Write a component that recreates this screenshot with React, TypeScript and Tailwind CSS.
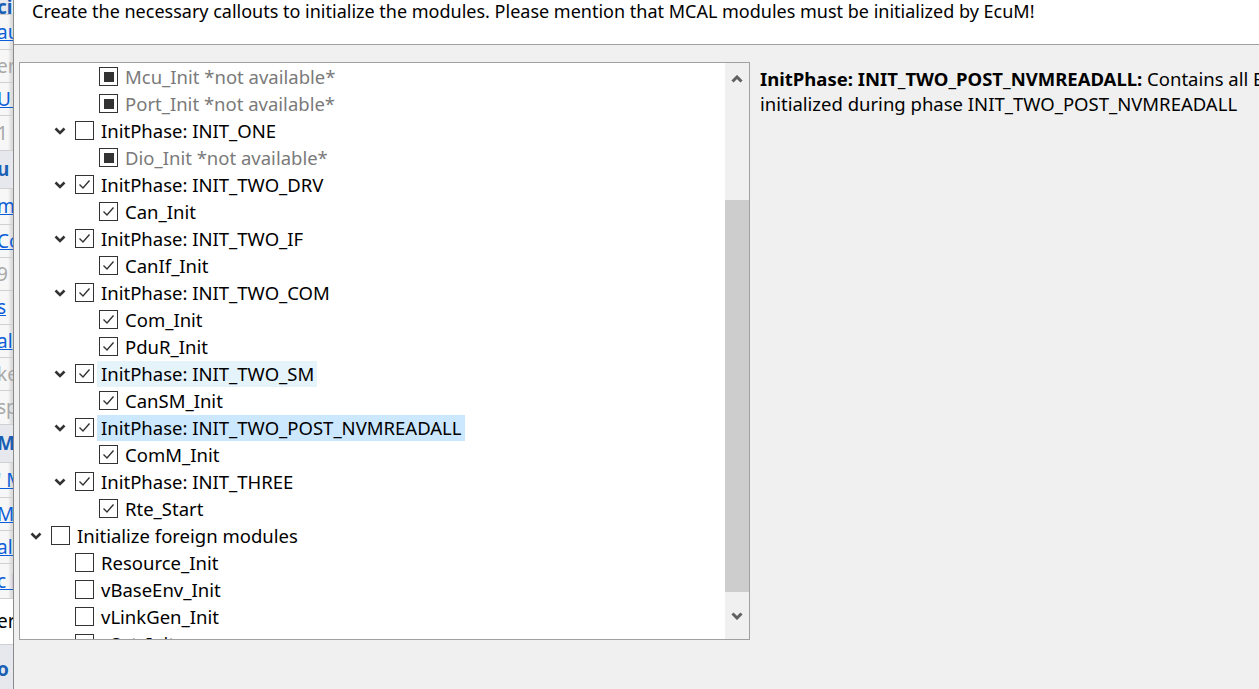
import React from "react";

type Node = {
  label: string;
  level: number;
  state: "on" | "off" | "na";
  expand?: boolean;
  hl?: "hover" | "sel";
};

const nodes: Node[] = [
  { label: "Mcu_Init *not available*", level: 2, state: "na" },
  { label: "Port_Init *not available*", level: 2, state: "na" },
  { label: "InitPhase: INIT_ONE", level: 1, state: "off", expand: true },
  { label: "Dio_Init *not available*", level: 2, state: "na" },
  { label: "InitPhase: INIT_TWO_DRV", level: 1, state: "on", expand: true },
  { label: "Can_Init", level: 2, state: "on" },
  { label: "InitPhase: INIT_TWO_IF", level: 1, state: "on", expand: true },
  { label: "CanIf_Init", level: 2, state: "on" },
  { label: "InitPhase: INIT_TWO_COM", level: 1, state: "on", expand: true },
  { label: "Com_Init", level: 2, state: "on" },
  { label: "PduR_Init", level: 2, state: "on" },
  { label: "InitPhase: INIT_TWO_SM", level: 1, state: "on", expand: true, hl: "hover" },
  { label: "CanSM_Init", level: 2, state: "on" },
  { label: "InitPhase: INIT_TWO_POST_NVMREADALL", level: 1, state: "on", expand: true, hl: "sel" },
  { label: "ComM_Init", level: 2, state: "on" },
  { label: "InitPhase: INIT_THREE", level: 1, state: "on", expand: true },
  { label: "Rte_Start", level: 2, state: "on" },
  { label: "Initialize foreign modules", level: 0, state: "off", expand: true },
  { label: "Resource_Init", level: 1, state: "off" },
  { label: "vBaseEnv_Init", level: 1, state: "off" },
  { label: "vLinkGen_Init", level: 1, state: "off" },
  { label: "vSet_Init", level: 1, state: "off" },
];

// fragments of the window lying behind the dialog
const strip = [
  { t: "ci", h: 15, kind: "head" },
  { t: "au", h: 35, kind: "link" },
  { t: "er", h: 33, kind: "gray" },
  { t: "U I", h: 33, kind: "link" },
  { t: "1 T", h: 35, kind: "gray" },
  { t: "u", h: 38, kind: "head" },
  { t: "m", h: 36, kind: "link" },
  { t: "Co", h: 33, kind: "link" },
  { t: "9", h: 33, kind: "gray" },
  { t: "s", h: 34, kind: "link" },
  { t: "al", h: 33, kind: "link" },
  { t: "ke", h: 33, kind: "gray" },
  { t: "sp", h: 34, kind: "gray" },
  { t: "M", h: 38, kind: "head" },
  { t: "' M", h: 35, kind: "link" },
  { t: "M", h: 33, kind: "link" },
  { t: "ali", h: 33, kind: "link" },
  { t: "c E", h: 35, kind: "link" },
  { t: "er", h: 46, kind: "plain" },
  { t: "o", h: 50, kind: "head" },
];

function Chevron({ className, w = 2.6 }: { className?: string; w?: number }) {
  return (
    <svg width="12" height="8" viewBox="0 0 12 8" className={className}>
      <polyline points="1.5,1.5 6,6 10.5,1.5" fill="none" stroke="currentColor" strokeWidth={w} />
    </svg>
  );
}

function Box({ state }: { state: Node["state"] }) {
  return (
    <div className="flex h-[19px] w-[19px] shrink-0 items-center justify-center border border-[#333333] bg-white">
      {state === "na" && <div className="h-[10px] w-[10px] bg-[#333333]" />}
      {state === "on" && (
        <svg width="15" height="15" viewBox="0 0 15 15">
          <polyline points="2.5,7.5 6,11 12.5,3.5" fill="none" stroke="#333333" strokeWidth="1.4" />
        </svg>
      )}
    </div>
  );
}

function Row({ n }: { n: Node }) {
  const pad = ["pl-[8px]", "pl-[32px]", "pl-[56px]"][n.level];
  const hl =
    n.hl === "sel" ? "bg-[#cce8ff]" : n.hl === "hover" ? "bg-[#e5f3fb]" : "";
  return (
    <div className={`flex h-[27px] shrink-0 items-center ${pad}`}>
      <div className="flex w-[16px] shrink-0 justify-center text-[#333333]">
        {n.expand && <Chevron />}
      </div>
      <div className="ml-[7px]">
        <Box state={n.state} />
      </div>
      <span
        className={`ml-[3px] flex h-[26px] items-center whitespace-nowrap pl-[4px] pr-[3px] ${hl} ${
          n.state === "na" ? "text-[#7a7a7a]" : "text-black"
        }`}
      >
        {n.label}
      </span>
    </div>
  );
}

export default function App() {
  return (
    <div
      className="flex h-[689px] w-[1259px] overflow-hidden bg-[#f0f0f0] text-[18.5px]"
      style={{ fontFamily: '"Noto Sans", "Open Sans", sans-serif' }}
    >
      {/* window behind */}
      <div className="flex w-[14px] shrink-0 flex-col overflow-hidden border-r border-[#8a8a8a] bg-[#f7f7f7] shadow-[inset_-3px_0_3px_rgba(0,0,0,0.12)]">
        {strip.map((s, i) => (
          <div
            key={i}
            className={`flex shrink-0 items-center overflow-hidden whitespace-nowrap border-b border-[#d0d0d0] text-[19px] ${
              s.kind === "head" ? "bg-[#e6e8ee] font-bold text-[#1a5fb4]" : ""
            } ${s.kind === "link" ? "text-[#0b5ed7] underline" : ""} ${
              s.kind === "gray" ? "text-[#a8a8a8]" : ""
            } ${s.kind === "plain" ? "bg-white text-black" : ""}`}
            style={{ height: s.h }}
          >
            <span className="-ml-[3px]">{s.t}</span>
          </div>
        ))}
      </div>

      <div className="flex min-w-0 flex-1 flex-col">
        {/* header */}
        <div className="flex h-[45px] shrink-0 items-start border-b border-[#a0a0a0] bg-white pl-[18px]">
          <span className="whitespace-nowrap text-[18px] leading-[23px] text-black">
            Create the necessary callouts to initialize the modules. Please mention that MCAL modules must be
            initialized by EcuM!
          </span>
        </div>

        <div className="flex min-h-0 flex-1 pl-[5px] pt-[17px]">
          {/* tree */}
          <div className="flex h-[578px] w-[731px] shrink-0 border border-[#a0a0a0] bg-white">
            <div className="flex flex-1 flex-col overflow-hidden">
              {nodes.map((n, i) => (
                <Row key={i} n={n} />
              ))}
            </div>
            <div className="flex w-[24px] shrink-0 flex-col bg-[#f0f0f0] text-[#606060]">
              <div className="flex h-[32px] items-center justify-center">
                <Chevron className="rotate-180" w={3} />
              </div>
              <div className="mt-[105px] h-[392px] bg-[#cdcdcd]" />
              <div className="flex flex-1 items-center justify-center">
                <Chevron w={3} />
              </div>
            </div>
          </div>

          {/* description */}
          <div className="ml-[10px] min-w-0 flex-1 overflow-hidden pt-[4px] leading-[25px] text-black">
            <div className="whitespace-nowrap">
              <span className="font-bold">InitPhase: INIT_TWO_POST_NVMREADALL:</span> Contains all BSW modules which are
            </div>
            <div className="whitespace-nowrap">initialized during phase INIT_TWO_POST_NVMREADALL</div>
          </div>
        </div>
      </div>
    </div>
  );
}
